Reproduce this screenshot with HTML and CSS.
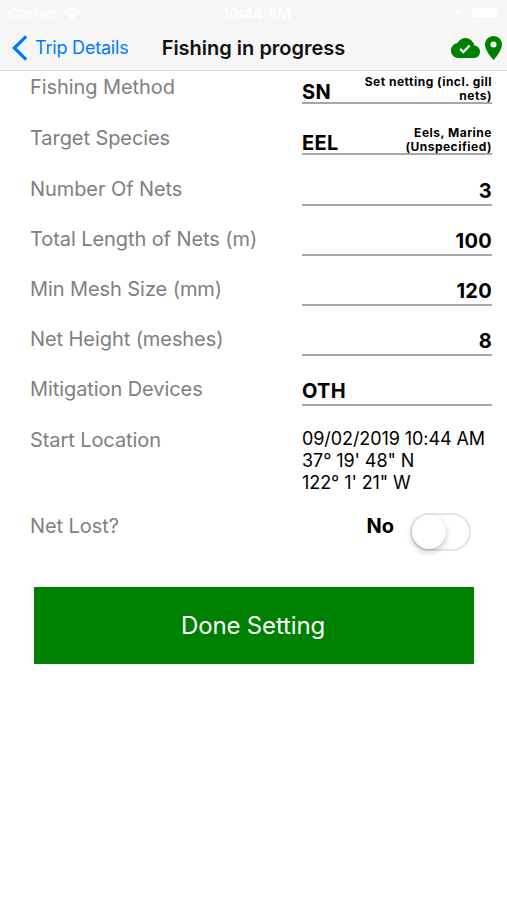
FILE: index.html
```html
<!DOCTYPE html>
<html lang="en">
  <head>
    <meta charset="UTF-8" />
    <meta name="viewport" content="width=device-width, initial-scale=1.0" />
    <title>Fishing in progress</title>
    <link rel="stylesheet" href="styles.css">
  </head>
  <body>
    <header class="header">
      <div class="status">
        <div class="carrier">
          <span>Carrier</span>
          <svg width="16" height="11" viewBox="0 0 16 11" fill="#fff">
            <path d="M0 3.2a11.5 11.5 0 0 1 16 0L14.4 5a9 9 0 0 0-12.8 0zM2.6 6a7.8 7.8 0 0 1 10.8 0L8 11z" />
          </svg>
        </div>
        <div class="time">10:44 AM</div>
        <div class="battery">
          <svg width="10" height="10" viewBox="0 0 10 10" fill="#fff"><path d="M0 4.5 9.5 0.5 5.5 10 5 5z" /></svg>
          <span class="level"></span>
        </div>
      </div>
      <nav class="nav">
        <a class="back">
          <svg width="16" height="26" viewBox="0 0 16 26" fill="none" stroke="#007aff" stroke-width="3.2">
            <path d="M14.2 1.3 2.3 13l11.9 11.7" />
          </svg>
          <span>Trip Details</span>
        </a>
        <h1 class="title">Fishing in progress</h1>
        <div class="icons">
          <svg width="29" height="20" viewBox="0 0 24 16" preserveAspectRatio="none">
            <path fill="green" d="M19.35 6.04A7.49 7.49 0 0 0 12 0C9.11 0 6.6 1.64 5.35 4.04A5.994 5.994 0 0 0 0 10c0 3.31 2.69 6 6 6h13c2.76 0 5-2.24 5-5 0-2.64-2.05-4.78-4.65-4.96z" />
            <path fill="none" stroke="#f6f6f6" stroke-width="1.9" d="m7.6 8.7 2.6 2.6 5.3-5.3" />
          </svg>
          <svg width="17" height="24" viewBox="0 0 14 20" preserveAspectRatio="none">
            <path fill="green" d="M7 0C3.13 0 0 3.13 0 7c0 5.25 7 13 7 13s7-7.75 7-13c0-3.87-3.13-7-7-7z" />
            <circle cx="7" cy="7" r="2.5" fill="#f6f6f6" />
          </svg>
        </div>
      </nav>
    </header>
    <form class="form">
      <div class="item first">
        <label>Fishing Method</label>
        <div class="field code"><b>SN</b><span class="desc">Set netting (incl. gill nets)</span></div>
      </div>
      <div class="item tall">
        <label>Target Species</label>
        <div class="field code"><b>EEL</b><span class="desc">Eels, Marine (Unspecified)</span></div>
      </div>
      <div class="item tall">
        <label>Number Of Nets</label>
        <div class="field number">3</div>
      </div>
      <div class="item">
        <label>Total Length of Nets (m)</label>
        <div class="field number">100</div>
      </div>
      <div class="item">
        <label>Min Mesh Size (mm)</label>
        <div class="field number">120</div>
      </div>
      <div class="item">
        <label>Net Height (meshes)</label>
        <div class="field number">8</div>
      </div>
      <div class="item">
        <label>Mitigation Devices</label>
        <div class="field">OTH</div>
      </div>
      <div class="item location">
        <label>Start Location</label>
        <div class="place">
          <div class="date">09/02/2019 10:44 AM</div>
          <div class="lat">37° 19' 48" N</div>
          <div class="lng">122° 1' 21" W</div>
        </div>
      </div>
      <div class="item lost">
        <label>Net Lost?</label>
        <div class="answer">
          <span class="no">No</span>
          <span class="switch"><span class="knob"></span></span>
        </div>
      </div>
      <button class="done" type="button">Done Setting</button>
    </form>
  </body>
</html>
```

FILE: styles.css
```css
body {
  margin: 0;
  background: #fff;
  color: #000;
  font-family: Inter, "Liberation Sans", sans-serif;
}
.header {
  height: 71px;
  box-sizing: border-box;
  background: #f6f6f6;
  border-bottom: 1px solid #dcdcdc;
}
.status {
  display: grid;
  grid-template-columns: 1fr auto 1fr;
  align-items: center;
  height: 26px;
  padding: 0 10px 0 8px;
  color: #fff;
  font-size: 15px;
}
.carrier,
.battery {
  display: flex;
  align-items: center;
  gap: 7px;
}
.time {
  padding-left: 9px;
  font-weight: 500;
}
.battery {
  justify-content: flex-end;
  gap: 10px;
}
.level {
  width: 25px;
  height: 10px;
  border-radius: 3px;
  background: #fff;
}
.nav {
  display: grid;
  grid-template-columns: 1fr auto 1fr;
  align-items: center;
  height: 43px;
  padding: 0 5px;
}
.back {
  display: flex;
  align-items: center;
  gap: 7px;
  padding-left: 7px;
  color: #007aff;
  font-size: 18px;
  letter-spacing: -0.2px;
}
.title {
  margin: 0;
  color: #111;
  font-size: 20px;
  font-weight: 600;
}
.icons {
  display: flex;
  align-items: center;
  justify-content: flex-end;
  gap: 5px;
}
.form {
  padding: 0 15px 0 30px;
}
.item {
  display: flex;
  justify-content: space-between;
  align-items: flex-end;
  height: 50px;
}
.first {
  height: 33px;
}
.tall {
  height: 51px;
}
label {
  color: #808080;
  font-size: 20px;
  letter-spacing: -0.08px;
  line-height: 33px;
}
.field {
  width: 190px;
  height: 31px;
  box-sizing: border-box;
  border-bottom: 2px solid #a6a6a6;
  font-size: 20px;
  font-weight: 700;
  letter-spacing: 0.3px;
  line-height: 33px;
}
.number {
  text-align: right;
}
.code {
  display: flex;
  justify-content: space-between;
  align-items: flex-end;
}
.code b {
  font-weight: 700;
  line-height: 20px;
}
.desc {
  width: 136px;
  margin-bottom: -1px;
  font-size: 12px;
  letter-spacing: 0.5px;
  line-height: 14px;
  text-align: right;
}
.location {
  align-items: flex-start;
  height: 66px;
  padding-top: 22px;
}
.location label {
  line-height: 24px;
}
.place {
  width: 190px;
  font-size: 18px;
  letter-spacing: -0.08px;
  line-height: 22px;
  white-space: nowrap;
}
.lost {
  align-items: flex-start;
  height: 38px;
  padding: 19px 21px 0 0;
}
.lost label {
  line-height: 27px;
}
.answer {
  display: flex;
  gap: 16px;
}
.no {
  font-size: 20px;
  font-weight: 700;
  line-height: 27px;
}
.switch {
  width: 61px;
  height: 38px;
  box-sizing: border-box;
  border: 2px solid #e5e5e5;
  border-radius: 19px;
}
.knob {
  display: block;
  width: 34px;
  height: 34px;
  border-radius: 50%;
  background: #fff;
  box-shadow: 0 3px 7px rgba(0, 0, 0, 0.2), 0 1px 1px rgba(0, 0, 0, 0.12);
}
.done {
  display: block;
  width: 440px;
  height: 77px;
  margin: 36px 0 0 4px;
  padding: 0 8px 0 6px;
  border: 0;
  background: green;
  color: #fff;
  font-family: inherit;
  font-size: 24px;
  letter-spacing: -0.15px;
}
```
